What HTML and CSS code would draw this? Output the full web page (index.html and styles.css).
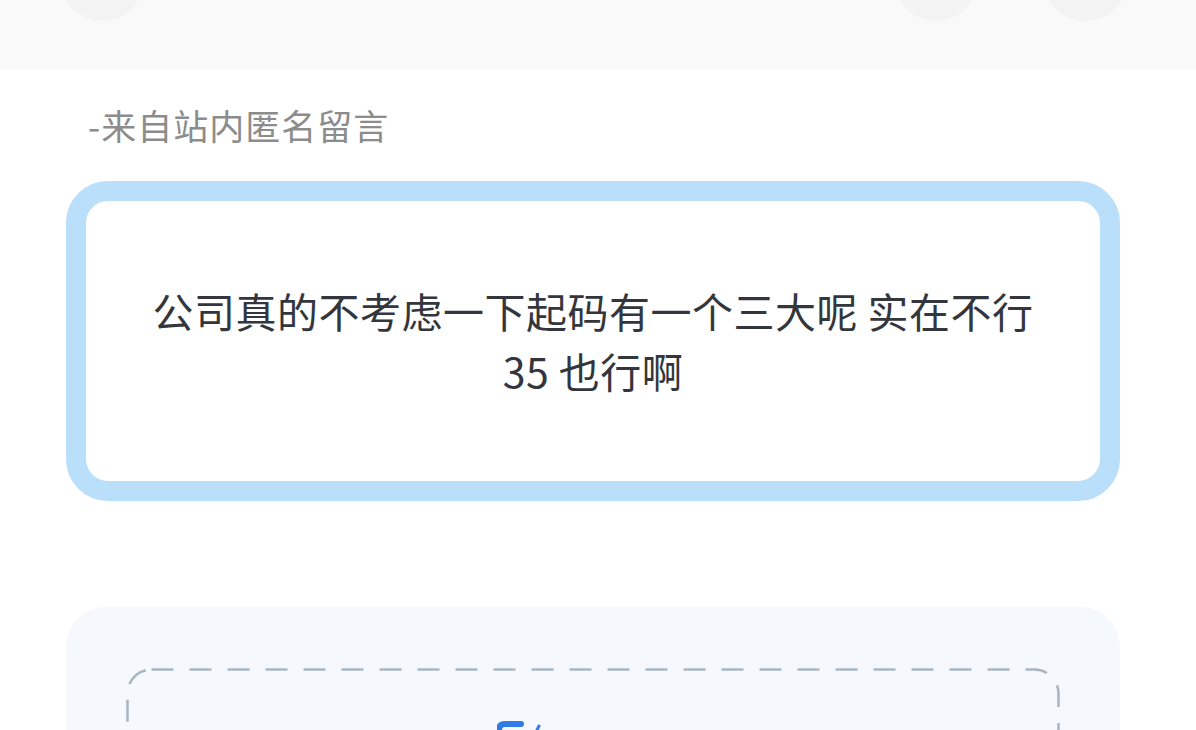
FILE: index.html
```html
<!DOCTYPE html>
<html lang="zh-CN">
<head>
    <meta charset="UTF-8">
    <meta name="viewport" content="width=device-width, initial-scale=1.0">
    <title>匿名留言</title>
    <link rel="stylesheet" href="styles.css">
</head>
<body>
    <div class="top-bar">
        <div class="round-btn"></div>
        <div class="top-actions">
            <div class="round-btn"></div>
            <div class="round-btn"></div>
        </div>
    </div>

    <div class="page">
        <p class="source">-来自站内匿名留言</p>

        <div class="quote-card">
            <p class="quote-text">公司真的不考虑一下起码有一个三大呢 实在不行 35 也行啊</p>
        </div>

        <div class="upload-panel">
            <div class="upload-box">
                <!-- long-dash frame, css dashed is too short -->
                <svg class="upload-frame" width="934" height="300" viewBox="0 0 934 300">
                    <rect x="1.5" y="1.5" width="931" height="320" rx="24" fill="none" stroke="#a9b5c2" stroke-width="2.5" stroke-dasharray="22 16"/>
                </svg>
                <svg class="upload-icon" width="48" height="20" viewBox="0 0 48 20">
                    <path d="M2 20 V10 Q2 4 8 4 H24" fill="none" stroke="#2f7be8" stroke-width="6" stroke-linecap="round"/>
                    <path d="M36 18 L42 6" fill="none" stroke="#2f7be8" stroke-width="3" stroke-linecap="round"/>
                </svg>
            </div>
        </div>
    </div>
</body>
</html>
```

FILE: styles.css
```css
html, body {
    height: 100%;
}
body {
    margin: 0;
    background-color: #ffffff;
    font-family: "Noto Sans CJK SC", "Noto Sans", sans-serif;
    color: #33373d;
    overflow: hidden;
}
.top-bar {
    height: 69px;
    background-color: #f9f9f9;
    display: flex;
    justify-content: space-between;
    align-items: flex-start;
    padding: 0 69px 0 60px;
}
.top-actions {
    display: flex;
    gap: 65px;
}
.round-btn {
    width: 84px;
    height: 84px;
    margin-top: -63px;
    border-radius: 50%;
    background-color: #f3f3f3;
}
.page {
    padding: 0 76px 0 66px;
}
.source {
    margin: 32px 0 0 22px;
    font-size: 35px;
    line-height: 48px;
    letter-spacing: 1px;
    color: #8c8c8c;
}
.quote-card {
    margin-top: 32px;
    border: 20px solid #b9dffb;
    border-radius: 42px;
    background-color: #ffffff;
    padding: 79px 60px 81px;
}
.quote-text {
    margin: 0;
    text-align: center;
    font-size: 41px;
    line-height: 60px;
    letter-spacing: 0.5px;
    color: #33373d;
}
.upload-panel {
    margin-top: 106px;
    background-color: #f5f8fc;
    border-radius: 40px;
    padding: 61px 60px 0;
    height: 400px;
}
.upload-box {
    position: relative;
    height: 300px;
    padding: 52px 0 0 371px;
}
.upload-frame {
    position: absolute;
    top: 0;
    left: 0;
}
.upload-icon {
    display: block;
}
```
